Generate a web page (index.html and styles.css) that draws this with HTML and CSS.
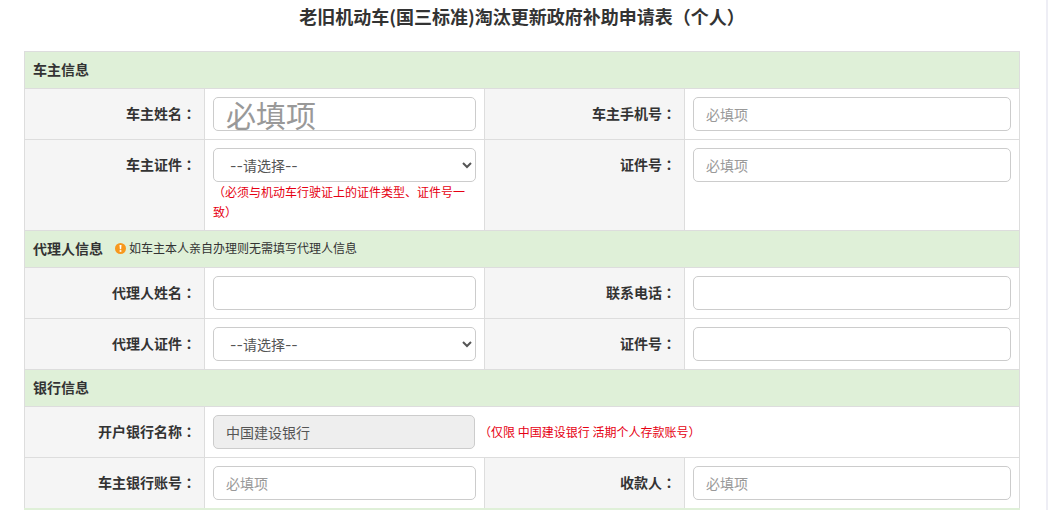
FILE: index.html
```
<!DOCTYPE html>
<html lang="zh-CN">
<head>
  <meta charset="UTF-8">
  <title>老旧机动车淘汰更新政府补助申请表</title>
  <meta name="viewport" content="width=device-width, initial-scale=1.0">
  <link rel="stylesheet" href="styles.css">
</head>
<body>

  <form class="page">
    <h1 class="title">老旧机动车(国三标准)淘汰更新政府补助申请表（个人）</h1>

    <table class="form-table">
      <colgroup>
        <col class="col-label">
        <col class="col-field">
        <col class="col-label-wide">
        <col>
      </colgroup>
      <tbody>
        <!-- 车主信息 -->
        <tr>
          <th class="section" colspan="4">车主信息</th>
        </tr>
        <tr>
          <th class="label"><label for="ownerName">车主姓名<span class="colon">：</span></label></th>
          <td><input type="text" id="ownerName" class="form-control input-big" placeholder="必填项"></td>
          <th class="label"><label for="ownerPhone">车主手机号<span class="colon">：</span></label></th>
          <td><input type="text" id="ownerPhone" class="form-control" placeholder="必填项"></td>
        </tr>
        <tr>
          <th class="label"><label for="ownerCardType">车主证件<span class="colon">：</span></label></th>
          <td>
            <select id="ownerCardType" class="form-control">
              <option value="">--请选择--</option>
              <option value="1">居民身份证</option>
              <option value="2">护照</option>
            </select>
            <div class="note">（必须与机动车行驶证上的证件类型、证件号一致）</div>
          </td>
          <th class="label"><label for="ownerCardNo">证件号<span class="colon">：</span></label></th>
          <td><input type="text" id="ownerCardNo" class="form-control" placeholder="必填项"></td>
        </tr>

        <!-- 代理人信息 -->
        <tr>
          <th class="section" colspan="4">
            <div class="section-row">
              <span>代理人信息</span>
              <span class="tip">
                <svg class="tip-icon" width="11" height="11" viewBox="0 0 10 10">
                  <circle cx="5" cy="5" r="5" fill="#f7981d"/>
                  <path d="M4.1 1.8h1.8l-.3 3.9h-1.2z" fill="#fff"/>
                  <rect x="4.2" y="6.5" width="1.6" height="1.5" fill="#fff"/>
                </svg>
                <span>如车主本人亲自办理则无需填写代理人信息</span>
              </span>
            </div>
          </th>
        </tr>
        <tr>
          <th class="label"><label for="agentName">代理人姓名<span class="colon">：</span></label></th>
          <td><input type="text" id="agentName" class="form-control"></td>
          <th class="label"><label for="agentPhone">联系电话<span class="colon">：</span></label></th>
          <td><input type="text" id="agentPhone" class="form-control"></td>
        </tr>
        <tr>
          <th class="label"><label for="agentCardType">代理人证件<span class="colon">：</span></label></th>
          <td>
            <select id="agentCardType" class="form-control">
              <option value="">--请选择--</option>
              <option value="1">居民身份证</option>
              <option value="2">护照</option>
            </select>
          </td>
          <th class="label"><label for="agentCardNo">证件号<span class="colon">：</span></label></th>
          <td><input type="text" id="agentCardNo" class="form-control"></td>
        </tr>

        <!-- 银行信息 -->
        <tr>
          <th class="section" colspan="4">银行信息</th>
        </tr>
        <tr>
          <th class="label"><label for="bankName">开户银行名称<span class="colon">：</span></label></th>
          <td colspan="3">
            <div class="bank-row">
              <input type="text" id="bankName" class="form-control bank-name" value="中国建设银行" readonly>
              <span class="note">（仅限 中国建设银行 活期个人存款账号）</span>
            </div>
          </td>
        </tr>
        <tr>
          <th class="label"><label for="bankAccount">车主银行账号<span class="colon">：</span></label></th>
          <td><input type="text" id="bankAccount" class="form-control" placeholder="必填项"></td>
          <th class="label"><label for="payee">收款人<span class="colon">：</span></label></th>
          <td><input type="text" id="payee" class="form-control" placeholder="必填项"></td>
        </tr>
      </tbody>
    </table>
  </form>

</body>
</html>
```
FILE: styles.css
```
* {
  box-sizing: border-box;
}

body {
  margin: 0;
  font-family: "Noto Sans CJK SC", sans-serif;
  font-size: 14px;
  line-height: 20px;
  color: #333;
  background-color: #fff;
}

.page {
  min-height: 100vh;
  padding: 4px 26px 0 24px;
  border-right: 2px solid #eeeef5;
}

.title {
  margin: 0 0 23px;
  font-size: 18px;
  line-height: 24px;
  font-weight: bold;
  text-align: center;
}

/* full-width colon sits in the middle of its box */
.colon {
  font-family: "Noto Sans CJK TC", sans-serif;
  font-feature-settings: "locl" 0;
}

.form-table {
  width: 100%;
  table-layout: fixed;
  border-collapse: collapse;
  border-bottom: 2px solid #dff0d8;
}

.col-label {
  width: 180px;
}

.col-field {
  width: 280px;
}

.col-label-wide {
  width: 200px;
}

.form-table th,
.form-table td {
  padding: 8px;
  border: 1px solid #ddd;
  vertical-align: top;
  text-align: left;
}

.form-table .section {
  padding: 7px 8px 9px;
  background-color: #dff0d8;
}

.form-table .label {
  padding-top: 14px;
  text-align: right;
  background-color: #f5f5f5;
}

.section-row {
  display: flex;
  align-items: center;
  gap: 12px;
}

.tip {
  display: flex;
  align-items: center;
  gap: 3px;
  font-size: 12px;
  font-weight: normal;
}

.form-control {
  display: block;
  width: 100%;
  height: 34px;
  padding: 6px 12px;
  font-family: inherit;
  font-size: 14px;
  line-height: 20px;
  color: #555;
  background-color: #fff;
  border: 1px solid #ccc;
  border-radius: 5px;
}

select.form-control {
  font-family: Inter, "Noto Sans CJK SC", sans-serif;
}

.form-control::placeholder {
  color: #999;
}

.form-control[readonly] {
  background-color: #eee;
}

.input-big {
  padding: 0 12px;
  font-size: 30px;
}

.note {
  font-size: 12px;
  color: #e60012;
}

.bank-row {
  display: flex;
  align-items: center;
  gap: 4px;
}

.bank-name {
  width: 262px;
}
```
